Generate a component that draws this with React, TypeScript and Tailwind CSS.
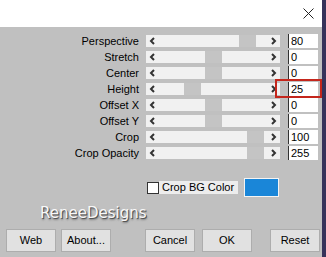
const rows = [
  { label: 'Perspective', pos: 93, value: '80' },
  { label: 'Stretch', pos: 59, value: '0' },
  { label: 'Center', pos: 59, value: '0' },
  { label: 'Height', pos: 38, value: '25' },
  { label: 'Offset X', pos: 59, value: '0' },
  { label: 'Offset Y', pos: 59, value: '0' },
  { label: 'Crop', pos: 101, value: '100' },
  { label: 'Crop Opacity', pos: 101, value: '255' },
]

function Chevron({ dir }: { dir: 'left' | 'right' }) {
  return (
    <svg width="7" height="8" viewBox="0 0 7 8" className="relative shrink-0">
      <path
        d={dir === 'left' ? 'M5 1 L2 4 L5 7' : 'M2 1 L5 4 L2 7'}
        fill="none"
        stroke="#333"
        strokeWidth="2"
      />
    </svg>
  )
}

function Slider({ pos }: { pos: number }) {
  return (
    <div className="relative flex h-[12px] w-[134px] items-center justify-between bg-[#f1f1f1] px-[3px]">
      <div className="absolute top-0 h-[12px] w-[17px] bg-[#c4c4c4]" style={{ left: pos }} />
      <Chevron dir="left" />
      <Chevron dir="right" />
    </div>
  )
}

function Button({ children }: { children: string }) {
  return (
    <div className="flex h-[23px] w-[50px] items-center justify-center border border-[#adadad] bg-[#e1e1e1] text-[11px] text-black">
      {children}
    </div>
  )
}

export default function App() {
  return (
    <div className="relative flex h-[257px] w-[326px] overflow-hidden font-['Liberation_Sans',Arial,sans-serif]">
      <div className="flex w-[322px] flex-col">
        <div className="flex h-[27px] items-center justify-end bg-white pr-[8px]">
          <svg width="11" height="11" viewBox="0 0 11 11">
            <path d="M0.5 0.5 L10.5 10.5 M10.5 0.5 L0.5 10.5" stroke="#222" strokeWidth="1" />
          </svg>
        </div>
        <div className="flex flex-1 flex-col bg-[#c0c0c0]">
          <div className="flex flex-col gap-[2px] pt-[7px]">
            {rows.map((r) => (
              <div key={r.label} className="flex h-[14px] items-center">
                <div className="w-[139px] text-right text-[11px] leading-none text-black">{r.label}</div>
                <div className="ml-[7px]">
                  <Slider pos={r.pos} />
                </div>
                <div className="ml-[8px] flex h-[14px] w-[30px] items-center border-l border-[#333] bg-white pl-[2px] text-[11px] leading-none text-black">
                  {r.value}
                </div>
              </div>
            ))}
          </div>

          <div className="mt-[18px] flex items-center">
            <div className="ml-[147px] h-[12px] w-[12px] border border-[#333] bg-white" />
            <div className="flex h-[13px] w-[79px] items-center bg-[#ededed] pl-[3px] text-[11px] leading-none text-black">
              Crop BG Color
            </div>
            <div className="ml-[6px] h-[19px] w-[35px] border border-[#f4f4f4] bg-[#1a86d8]" />
          </div>

          <div className="mt-[6px] flex h-[20px] items-center pl-[40px] font-['DejaVu_Sans',sans-serif] text-[15px] leading-none text-[#f8f8f8] [text-shadow:1px_1px_0_#555,1px_2px_2px_#777]">
            ReneeDesigns
          </div>

          <div className="mt-[6px] flex pl-[6px]">
            <Button>Web</Button>
            <div className="ml-[5px]">
              <Button>About...</Button>
            </div>
            <div className="ml-[34px]">
              <Button>Cancel</Button>
            </div>
            <div className="ml-[7px]">
              <Button>OK</Button>
            </div>
            <div className="ml-[18px]">
              <Button>Reset</Button>
            </div>
          </div>
        </div>
      </div>
      <div className="w-[4px] bg-[#36325a]" />
      <div className="absolute left-[275px] top-[79px] h-[19px] w-[47px] border-2 border-[#c4261c]" />
    </div>
  )
}
